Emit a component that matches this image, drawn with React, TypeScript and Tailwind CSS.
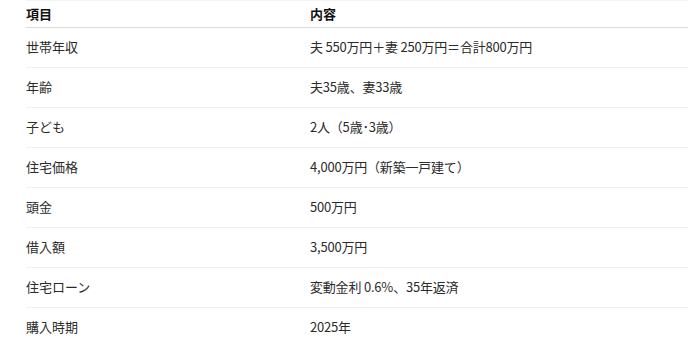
const rows: [string, string][] = [
  ["世帯年収", "夫 550万円＋妻 250万円＝合計800万円"],
  ["年齢", "夫35歳、妻33歳"],
  ["子ども", "2人（5歳･3歳）"],
  ["住宅価格", "4,000万円（新築一戸建て）"],
  ["頭金", "500万円"],
  ["借入額", "3,500万円"],
  ["住宅ローン", "変動金利 0.6%、35年返済"],
  ["購入時期", "2025年"],
];

export default function App() {
  return (
    <div
      className="w-[688px] h-[360px] overflow-hidden bg-white pl-[26px]"
      style={{ fontFamily: '"Noto Sans CJK JP", "Noto Sans", sans-serif' }}
    >
      <table className="w-full border-collapse text-[13px] border-t border-[#f4f4f4]">
        <thead>
          <tr className="h-[27px] border-b border-[#dcdcdc]">
            <th className="w-[284px] text-left font-bold text-[#111] p-0">項目</th>
            <th className="text-left font-bold text-[#111] p-0">内容</th>
          </tr>
        </thead>
        <tbody>
          {rows.map(([k, v], i) => (
            <tr
              key={k}
              className={i < rows.length - 1 ? "h-[40px] border-b border-[#efefef]" : "h-[40px]"}
            >
              <td className="p-0 pb-[2px] text-[#2b2b2b]">{k}</td>
              <td className="p-0 pb-[2px] text-[#2b2b2b] tracking-[-0.2px]">{v}</td>
            </tr>
          ))}
        </tbody>
      </table>
    </div>
  );
}
